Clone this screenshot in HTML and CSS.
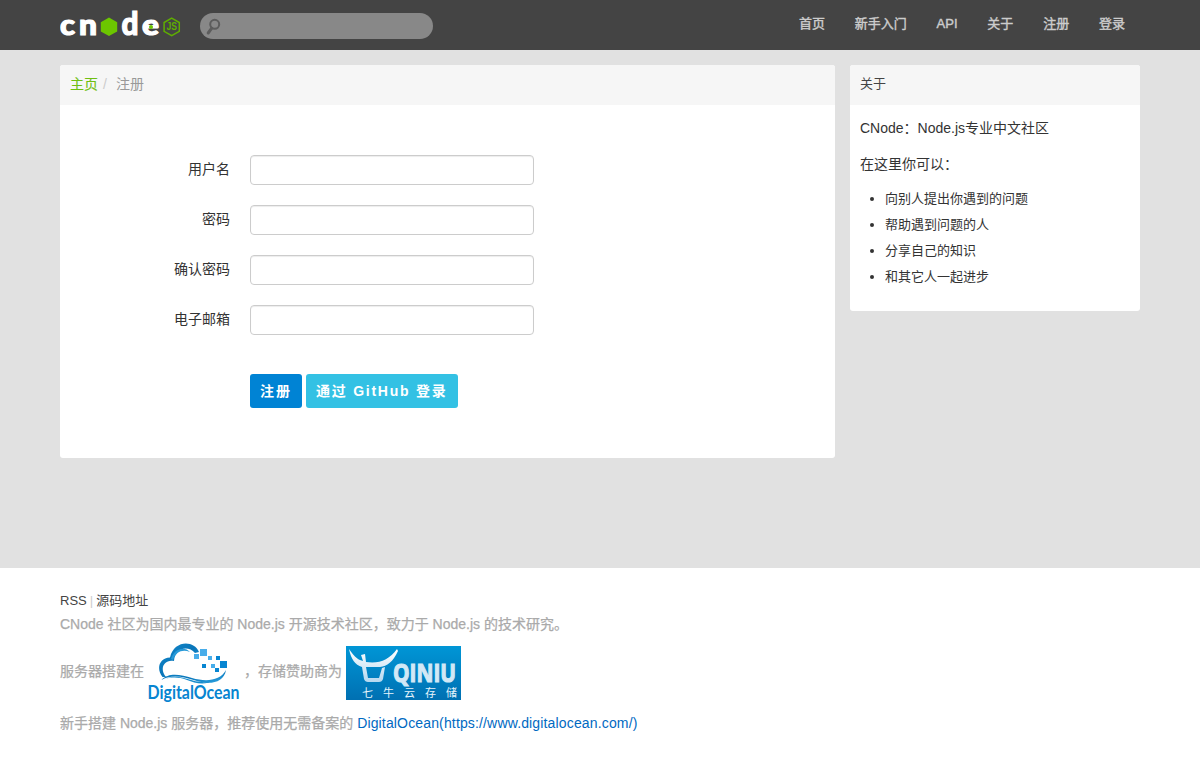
FILE: index.html
```html
<!DOCTYPE html>
<html lang="zh-CN">
<head>
<meta charset="utf-8">
<title>CNode：Node.js专业中文社区</title>
<link rel="stylesheet" href="styles.css">
</head>
<body>
<header class="navbar">
  <div class="container navbar-inner">
    <a class="brand" aria-label="cnode js">
      <svg width="121" height="32" viewBox="0 0 121 32">
        <g class="brand-text">
          <text x="0" y="26.500" textLength="15" lengthAdjust="spacingAndGlyphs">c</text>
          <text x="19" y="26.500" textLength="18" lengthAdjust="spacingAndGlyphs">n</text>
          <text class="brand-tall" x="61.500" y="26.500" textLength="17" lengthAdjust="spacingAndGlyphs">d</text>
          <text x="82" y="26.500" textLength="17" lengthAdjust="spacingAndGlyphs">e</text>
        </g>
        <path fill="#6cc600" d="M49 9.500l8.200 4.700v9.200L49 28.100l-8.200-4.700v-9.200z"/>
        <circle cx="91" cy="19" r="2" fill="#6cc600"/>
        <path fill="none" stroke="#5fae00" stroke-width="1.500" d="M111.700 10.200l7.600 4.300v8.800l-7.600 4.300-7.600-4.300v-8.800z"/>
        <text class="brand-js" x="106.500" y="22.400" textLength="10.500" lengthAdjust="spacingAndGlyphs">JS</text>
      </svg>
    </a>
    <form class="search">
      <svg width="16" height="18" viewBox="0 0 16 18" fill="none" stroke="#5c5c5c">
        <circle cx="8.700" cy="6.300" r="4.500" stroke-width="2"/>
        <path d="M5.700 10.200L2.200 15" stroke-width="3" stroke-linecap="round"/>
      </svg>
    </form>
    <nav class="nav"><a>首页</a><a>新手入门</a><a>API</a><a>关于</a><a>注册</a><a>登录</a></nav>
  </div>
</header>
<main class="container main">
  <section class="panel content">
    <div class="panel-header breadcrumb"><a>主页</a><span class="divider">/</span><span>注册</span></div>
    <form class="signup">
      <div class="row"><label for="name">用户名</label><input id="name" type="text"></div>
      <div class="row"><label for="pass">密码</label><input id="pass" type="password"></div>
      <div class="row"><label for="repass">确认密码</label><input id="repass" type="password"></div>
      <div class="row"><label for="email">电子邮箱</label><input id="email" type="text"></div>
      <div class="actions"><a class="btn primary">注册</a><a class="btn info">通过 GitHub 登录</a></div>
    </form>
  </section>
  <aside class="panel sidebar">
    <div class="panel-header">关于</div>
    <div class="about">
      <p><span>CNode：</span>Node.js专业中文社区</p>
      <p>在这里你可以：</p>
      <ul><li>向别人提出你遇到的问题</li><li>帮助遇到问题的人</li><li>分享自己的知识</li><li>和其它人一起进步</li></ul>
    </div>
  </aside>
</main>
<footer class="footer">
  <div class="container">
    <div class="links"><a>RSS</a><span class="bar">|</span><a>源码地址</a></div>
    <p class="intro">CNode 社区为国内最专业的 Node.js 开源技术社区，致力于 Node.js 的技术研究。</p>
    <div class="sponsors">
      <span>服务器搭建在</span>
      <svg class="ocean" width="94" height="66" viewBox="0 0 94 66">
        <defs><linearGradient id="sea" x1="0" y1="0" x2="1" y2="1"><stop offset="0" stop-color="#168bcc"/><stop offset=".5" stop-color="#0875b9"/><stop offset="1" stop-color="#31a7e5"/></linearGradient></defs>
        <path fill="url(#sea)" d="M15.500 34C9 26 12 15 23 14.500C27-3 47-3 52 9L48 10C41 2 28 5 27 18C17 16 12 26 19 34z"/>
        <path fill="#2799d8" d="M24 16C27 5 38 3 43 9C35 6 29 9 26 17z"/>
        <path fill="url(#sea)" d="M14.500 37C22 29 34 32 45 35C59 39 73 38 79 27C77 40 63 42 50 38C36 34 26 31 14.500 37z"/>
        <path fill="#168bcc" d="M18 36C32 30 42 38 51 38.500C60 40 64 39 67 37C58 43 48 40 40 37C31 34 26 34 18 36z"/>
        <g fill="#48adea"><path d="M47 11h5v5h-5zM53 6h7v7h-7zM69 8h0v0h0zM61 13h4v4h-4zM64 21h4v4h-4z"/></g>
        <g fill="#0785d1"><path d="M69 13h4v4h-4zM55 21h4v4h-4zM73 18h7v7h-7zM68 25h4v4h-4z"/></g>
        <text x="0.500" y="56" textLength="92" lengthAdjust="spacingAndGlyphs">DigitalOcean</text>
      </svg>
      <span class="storage">，存储赞助商为</span>
      <svg class="qiniu" width="115" height="54" viewBox="0 0 115 54">
        <defs><linearGradient id="sky" x1="0" y1="0" x2="0" y2="1"><stop offset="0" stop-color="#0096d6"/><stop offset="1" stop-color="#0070b2"/></linearGradient><linearGradient id="horn" x1="0" y1="0" x2="0" y2="1"><stop offset="0" stop-color="#fff"/><stop offset="1" stop-color="#b5d8f0"/></linearGradient></defs>
        <path fill="url(#sky)" d="M0 0h115v54H0z"/>
        <path fill="url(#horn)" d="M3 3C9 12 13 14 17 15L15 9L19 8L20 16C33 18 43 14 51 3L52 5C47 16 41 20 34 21L20 21L22 32L33 32L36 22L39 21L37 33Q36 36 33 36L22 36Q19 36 18 33L16 21C9 19 5 13 3 3z"/>
        <text class="qiniu-name" x="47" y="35.500" textLength="63" lengthAdjust="spacingAndGlyphs">QINIU</text>
        <text class="qiniu-sub" x="16 37 58 79 100" y="51">七牛云存储</text>
      </svg>
    </div>
    <p class="guide">新手搭建 Node.js 服务器，推荐使用无需备案的 <a>DigitalOcean(https://www.digitalocean.com/)</a></p>
  </div>
</footer>
</body>
</html>
```
FILE: styles.css
```css
* { box-sizing: border-box; }
body { margin: 0; background: #e1e1e1; color: #333; font: 14px/20px "Liberation Sans", "Noto Sans CJK SC", sans-serif; }
p { margin: 0; }
.container { width: 1080px; margin: 0 auto; }
.navbar { height: 50px; background: #444; }
.navbar-inner { display: flex; }
.brand { width: 140px; padding-top: 8px; }
.brand svg { display: block; }
.brand-text { font: 900 29px Lato, sans-serif; fill: #fff; stroke: #fff; stroke-width: 1.2px; }
.brand-tall { font-size: 33px; }
.brand-js { font: bold 10px "Liberation Sans", sans-serif; fill: #5fae00; }
.search { width: 233px; height: 26px; margin-top: 13px; padding: 5px 6px; border-radius: 13px; background: #888; }
.search svg { display: block; }
.nav { display: flex; gap: 29.800px; margin-left: auto; padding: 14px 15px 0 0; font-size: 13px; line-height: 20px; color: #ccc; -webkit-text-stroke: .4px #ccc; }
.main { display: flex; align-items: flex-start; gap: 15px; height: 518px; padding-top: 15px; }
.panel { border-radius: 3px; background: #fff; overflow: hidden; }
.panel-header { height: 40px; padding: 9px 10px; background: #f6f6f6; font-size: 13px; color: #444; }
.content { width: 775px; height: 393px; }
.breadcrumb { display: flex; font-size: 14px; color: #999; }
.breadcrumb a { color: #6fbf10; -webkit-text-stroke: .1px #6fbf10; }
.breadcrumb .divider { padding: 0 9px 0 5px; color: #ccc; }
.signup { padding-top: 50px; }
.row { display: flex; gap: 20px; height: 30px; margin-bottom: 20px; }
.row label { width: 170px; padding-top: 4px; text-align: right; }
.row input { width: 284px; height: 30px; border: 1px solid #ccc; border-radius: 4px; background: #fff; box-shadow: inset 0 1px 1px rgba(0, 0, 0, .075); }
.actions { display: flex; gap: 4px; padding: 19px 0 0 190px; }
.btn { height: 34px; padding: 7px 0 0 10px; border-radius: 3px; color: #fff; font-weight: bold; letter-spacing: 2px; white-space: nowrap; }
.primary { width: 52px; background: #0083d4; }
.info { width: 152px; background: #33c1e4; letter-spacing: 1.750px; }
.sidebar { width: 290px; height: 246px; }
.about { padding: 13px 10px; }
.about p { margin-bottom: 16px; }
.about ul { margin: -4px 0 0; padding-left: 25px; font-size: 13px; line-height: 26px; }
.footer { height: 195px; padding-top: 23px; background: #fff; color: #aaa; }
.links { display: flex; gap: 3px; font-size: 13px; color: #444; }
.bar { color: #ccc; }
.intro, .guide, .sponsors { -webkit-text-stroke: .25px #aaa; }
.intro { margin-top: 3px; }
.sponsors { display: flex; align-items: flex-start; height: 79px; padding-top: 9px; }
.sponsors > span { padding-top: 18px; }
.ocean { margin: 0 3px 0 3px; -webkit-text-stroke: 0; }
.ocean text { font: bold 18px Lato, sans-serif; fill: #0785d1; }
.storage { width: 98px; }
.qiniu { margin: 3px 0 0 4px; -webkit-text-stroke: 0; }
.qiniu-name { font: bold 25px "Open Sans", sans-serif; fill: #d2e8f6; stroke: #d2e8f6; stroke-width: 1.2px; }
.qiniu-sub { font: 11px "Noto Sans CJK SC", sans-serif; fill: #e6f4fc; }
.guide a { color: #0069c2; letter-spacing: .15px; -webkit-text-stroke: 0; }
```
